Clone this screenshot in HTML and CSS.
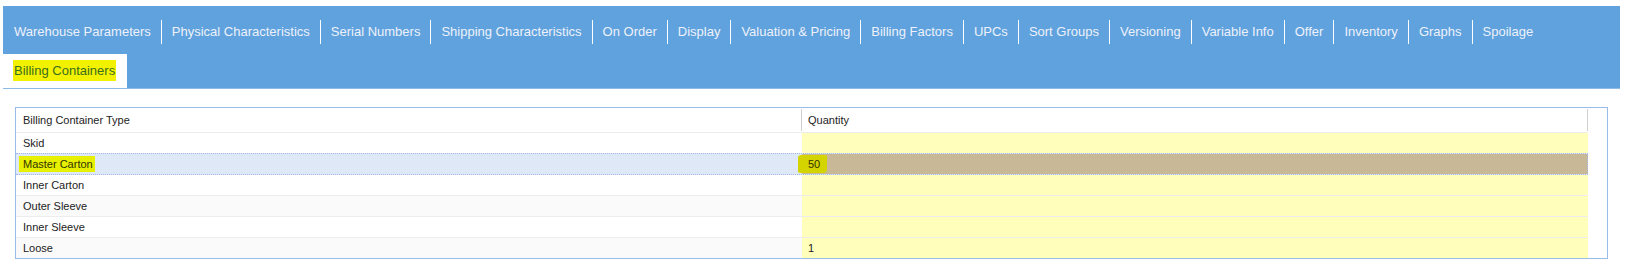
FILE: index.html
```html
<!DOCTYPE html>
<html>
<head>
    <title>Billing Containers</title>
    <link rel="stylesheet" href="styles.css">
</head>
<body>
    <div class="tabs">
        <span class="tab">Warehouse Parameters</span>
        <span class="tab">Physical Characteristics</span>
        <span class="tab">Serial Numbers</span>
        <span class="tab">Shipping Characteristics</span>
        <span class="tab">On Order</span>
        <span class="tab">Display</span>
        <span class="tab">Valuation &amp; Pricing</span>
        <span class="tab">Billing Factors</span>
        <span class="tab">UPCs</span>
        <span class="tab">Sort Groups</span>
        <span class="tab">Versioning</span>
        <span class="tab">Variable Info</span>
        <span class="tab">Offer</span>
        <span class="tab">Inventory</span>
        <span class="tab">Graphs</span>
        <span class="tab">Spoilage</span>
        <span class="tab active"><span class="marker">Billing Containers</span></span>
    </div>

    <div class="content">
        <div class="grid">
            <div class="grid-header">
                <div class="hcell">Billing Container Type</div>
                <div class="hcell">Quantity</div>
            </div>
            <div class="row">
                <div class="cell">Skid</div>
                <div class="cell qty"></div>
            </div>
            <div class="row selected">
                <div class="cell"><span class="marker-row">Master Carton</span></div>
                <div class="cell qty"><span class="marker-qty">50</span></div>
            </div>
            <div class="row">
                <div class="cell">Inner Carton</div>
                <div class="cell qty"></div>
            </div>
            <div class="row alt">
                <div class="cell">Outer Sleeve</div>
                <div class="cell qty"></div>
            </div>
            <div class="row">
                <div class="cell">Inner Sleeve</div>
                <div class="cell qty"></div>
            </div>
            <div class="row alt last">
                <div class="cell">Loose</div>
                <div class="cell qty">1</div>
            </div>
        </div>
    </div>
</body>
</html>
```

FILE: styles.css
```css
body {
    margin: 0;
    font-family: "Liberation Sans", Arial, sans-serif;
    background-color: #fff;
}

.tabs {
    margin: 6px 7px 0 3px;
    padding-top: 9px;
    background-color: #5fa2dd;
    border-bottom: 1px solid #8fb9e6;
    display: flex;
    flex-wrap: wrap;
    row-gap: 5px;
}

.tab {
    height: 34px;
    line-height: 34px;
    padding: 0 10px 0 11px;
    font-size: 13px;
    color: #eef1fb;
    white-space: nowrap;
    background: linear-gradient(#fff, #fff) left center / 1px 24px no-repeat;
}

.tab:first-child {
    background: none;
}

.tab.active {
    background: #fff;
    padding-right: 11px;
    color: #3b6d1d;
}

.marker {
    background-color: #f2f200;
    padding: 3px 1px;
    margin-left: -1px;
}

.content {
    padding: 18px 19px 0 15px;
}

.grid {
    border: 1px solid #99bbe8;
    font-size: 11px;
    color: #222;
    padding-right: 19px;
}

.grid-header,
.row {
    display: grid;
    grid-template-columns: 786px 786px;
}

.grid-header {
    height: 24px;
    border-bottom: 1px solid #ededed;
}

.hcell {
    padding-left: 7px;
    border-right: 1px solid #d0d0d0;
    margin: 1px 0;
    line-height: 22px;
}

.hcell + .hcell {
    padding-left: 6px;
}

.grid-header .hcell:first-child {
    width: 778px;
}

.row {
    height: 20px;
    border-bottom: 1px solid #ededed;
    background-color: #fff;
}

.row.alt {
    background-color: #fafafa;
}

.row.last {
    border-bottom: none;
}

.cell {
    line-height: 20px;
    padding-left: 7px;
}

.cell.qty {
    padding-left: 6px;
    background-color: #ffffbb;
}

.row.selected {
    background-color: #dfe8f6;
    border-top: 1px dotted #a3bae9;
    border-bottom: 1px dotted #a3bae9;
    margin-top: -1px;
    height: 20px;
}

.row.selected .cell.qty {
    background-color: #c9b898;
    border-right: 1px dotted #a3bae9;
}

.marker-row {
    background-color: #e6f000;
    padding: 2px 2px 2px 4px;
    margin-left: -4px;
    color: #333300;
}

.marker-qty {
    display: inline-block;
    line-height: 16px;
    background-color: #d4d400;
    padding: 1px 7px 1px 10px;
    margin-left: -10px;
    margin-top: 1px;
    vertical-align: top;
    border-radius: 3px 2px 4px 2px;
    color: #333300;
}
```
